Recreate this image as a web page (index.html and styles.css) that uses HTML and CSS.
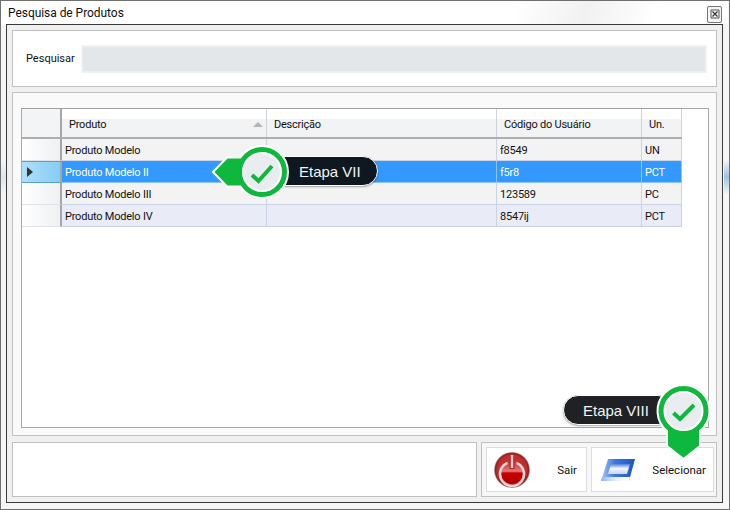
FILE: index.html
```html
<!DOCTYPE html>
<html lang="pt">
<head>
<meta charset="utf-8">
<title>Pesquisa de Produtos</title>
<link rel="stylesheet" href="styles.css">
</head>
<body>
<div class="window">
  <div class="glow glow-left"></div>
  <div class="glow glow-right"></div>
  <header class="titlebar">
    <span class="title">Pesquisa de Produtos</span>
    <button class="close" aria-label="Fechar">
      <svg width="10" height="10" viewBox="0 0 10 10"><path d="M1 1h8v8H1z" fill="none" stroke="#555" stroke-width="1"/><path d="M2.500 2.500l5 5M7.500 2.500l-5 5" stroke="#333" stroke-width="1.200"/></svg>
    </button>
  </header>
  <main class="client">
    <section class="panel search">
      <label class="search-label">Pesquisar</label>
      <div class="search-input"></div>
    </section>
    <section class="panel results">
      <div class="grid">
        <div class="table">
          <div class="row head">
            <div class="rowhead"></div>
            <div class="cell sorted">Produto<svg class="sort" width="10" height="5" viewBox="0 0 10 5"><path d="M0 5L5 0l5 5z" fill="#b4b4b4"/></svg></div>
            <div class="cell">Descrição</div>
            <div class="cell">Código do Usuário</div>
            <div class="cell">Un.</div>
          </div>
          <div class="row">
            <div class="rowhead"></div>
            <div class="cell">Produto Modelo</div><div class="cell"></div><div class="cell">f8549</div><div class="cell">UN</div>
          </div>
          <div class="row selected">
            <div class="rowhead"><svg width="6" height="10" viewBox="0 0 6 10"><path d="M0 0l6 5-6 5z" fill="#333"/></svg></div>
            <div class="cell">Produto Modelo II</div><div class="cell"></div><div class="cell">f5r8</div><div class="cell">PCT</div>
          </div>
          <div class="row">
            <div class="rowhead"></div>
            <div class="cell">Produto Modelo III</div><div class="cell"></div><div class="cell">123589</div><div class="cell">PC</div>
          </div>
          <div class="row alt">
            <div class="rowhead"></div>
            <div class="cell">Produto Modelo IV</div><div class="cell"></div><div class="cell">8547ij</div><div class="cell">PCT</div>
          </div>
        </div>
      </div>
    </section>
    <footer class="footer">
      <div class="panel status"></div>
      <div class="panel actions">
        <button class="action exit">
          <svg width="36" height="36" viewBox="0 0 36 36">
            <defs>
              <radialGradient id="red" cx="50%" cy="50%" r="50%"><stop offset="0" stop-color="#d84040"/><stop offset=".8" stop-color="#c42c2c"/><stop offset=".93" stop-color="#8e2424"/><stop offset="1" stop-color="#c8bcbc"/></radialGradient>
              <linearGradient id="core" x1="0" y1="0" x2="0" y2="1"><stop offset="0" stop-color="#c23a3a"/><stop offset=".42" stop-color="#e07a7a"/><stop offset=".5" stop-color="#cc0000"/><stop offset="1" stop-color="#b00000"/></linearGradient>
              <linearGradient id="blue" x1="0" y1="0" x2="1" y2="0"><stop offset="0" stop-color="#a8c6f4"/><stop offset=".4" stop-color="#3f78dc"/><stop offset="1" stop-color="#1f55c0"/></linearGradient>
              <linearGradient id="pane" x1="0" y1="0" x2="0" y2="1"><stop offset="0" stop-color="#4f80dc"/><stop offset=".45" stop-color="#f2f5fc"/><stop offset="1" stop-color="#c6d6f4"/></linearGradient>
              <linearGradient id="base" x1="0" y1="0" x2="1" y2="0"><stop offset="0" stop-color="#8fb6f0"/><stop offset=".5" stop-color="#e8f0fc"/><stop offset="1" stop-color="#ffffff"/></linearGradient>
            </defs>
            <circle cx="18" cy="18" r="18" fill="url(#red)"/>
            <circle cx="18" cy="21" r="11" fill="url(#core)"/>
            <path d="M13.500 10.900A12 12 0 1 0 22.500 10.900" fill="none" stroke="#efd6d6" stroke-width="2.600"/>
            <path d="M18 3v14" stroke="#b82828" stroke-width="5"/>
            <path d="M18 3v13" stroke="#eccccc" stroke-width="2.400"/>
          </svg>
          <span>Sair</span>
        </button>
        <button class="action select">
          <svg width="34" height="24" viewBox="0 0 34 24">
            <path d="M7 1h27l-6 22H0z" fill="url(#blue)"/>
            <path d="M10 6h19l-3 10H7z" fill="url(#pane)"/>
            <path d="M0 23h28l1-4H1z" fill="url(#base)"/>
          </svg>
          <span>Selecionar</span>
        </button>
      </div>
    </footer>
  </main>

  <div class="callout step7">
    <div class="pill pill7">Etapa VII</div>
    <svg class="badge" width="82" height="60" viewBox="0 0 82 60">
      <path d="M3 28L17 13.500h13.400A26 26 0 1 1 30.400 42.500H17z" fill="#0db83c" stroke="#fff" stroke-width="2"/>
      <circle cx="52" cy="28" r="19" fill="#e9edf0" stroke="#fff" stroke-width="2"/>
      <path d="M42 31l6.500 6L62 22" fill="none" stroke="#0db83c" stroke-width="4"/>
    </svg>
  </div>

  <div class="callout step8">
    <div class="pill pill8">Etapa VIII</div>
    <svg class="badge" width="60" height="82" viewBox="0 0 60 82">
      <path d="M13 50A26 26 0 1 1 46 50V65L29.500 78 13 65z" fill="#0db83c" stroke="#fff" stroke-width="2"/>
      <circle cx="29.500" cy="30" r="19" fill="#e9edf0" stroke="#fff" stroke-width="2"/>
      <path d="M19.500 32l6.500 6 14-14" fill="none" stroke="#0db83c" stroke-width="4"/>
    </svg>
  </div>
</div>
</body>
</html>
```

FILE: styles.css
```css
* { box-sizing: border-box; }
html, body { margin: 0; padding: 0; }
body { width: 730px; height: 510px; overflow: hidden; font-family: Roboto, "Noto Sans", sans-serif; font-size: 11px; letter-spacing: -.22px; color: #111; }

.window { position: relative; width: 730px; height: 510px; display: flex; flex-direction: column; background: #f5f5f5; border: 1px solid #6f6f6f; padding: 0 6px 6px 5px; }
.glow { position: absolute; width: 5px; height: 32px; top: 160px; background: linear-gradient(to bottom, #eef2f6, #8ab4e0 50%, #eef2f6); }
.glow-left { left: 0; opacity: .25; }
.glow-right { right: 0; opacity: .8; }

.titlebar { height: 23px; display: flex; align-items: center; justify-content: space-between; background: linear-gradient(110deg, #fff 70%, #f1f1f1 80%, #fff 90%); margin: 0 -5px 0 -5px; padding-left: 7px; padding-right: 6px; }
.title { font-size: 12px; letter-spacing: -.05px; color: #111; }
.close { width: 15px; height: 17px; padding: 0; border: 1px solid #777; border-radius: 2px; background: #f4f4f4; display: flex; align-items: center; justify-content: center; margin-top: 3px; }

.client { flex: 1; display: flex; flex-direction: column; gap: 5px; background: #f0f0f0; border: 1px solid #3a3a3a; padding: 5px; }
.panel { background: #fff; border: 1px solid #c0c0c0; }

.search { height: 57px; display: flex; align-items: center; padding: 0 10px 0 13px; flex: none; }
.search-label { width: 56px; font-size: 11px; letter-spacing: 0; flex: none; }
.search-input { flex: 1; height: 26px; background: #e4e7ea; border: 1px solid #eef0f2; box-shadow: 0 0 0 1px #f2f2f2; }

.results { height: 344px; padding: 15px 7px 7px 8px; flex: none; background: #fafafa; }
.grid { height: 100%; background: #fff; border: 1px solid #a8a8a8; }
.table { width: 660px; }
.row { display: grid; grid-template-columns: 40px 205px 230px 145px 40px; height: 22px; background: #f3f3f3; }
.row.alt { background: #e9ecf6; }
.row.head { background: linear-gradient(to bottom, #fff 35%, #f1f3f5 36%, #f1f3f5); border-top: 1px solid #a0a0a0; border-bottom: 2px solid #aeaeae; margin-top: -1px; height: 31px; }
.cell { display: flex; align-items: center; padding: 1px 0 0 3px; border-right: 1px solid #c9d2e6; border-bottom: 1px solid #c9d2e6; white-space: nowrap; overflow: hidden; }
.head .cell { padding: 2px 0 0 7px; border-bottom: 0; border-right: 1px solid #cfd2d6; }
.head .sorted { justify-content: space-between; padding-right: 3px; }
.rowhead { display: flex; align-items: center; padding-left: 5px; background: linear-gradient(to right, #fff, #eef0f2); border-right: 2px solid #a6a6a6; border-bottom: 1px solid #dfe2e6; }
.head .rowhead { background: #f3f4f5; border-bottom: 0; }
.selected { background: #3399ff; color: #fff; }
.selected .rowhead { background: linear-gradient(to right, #aee0fa, #86cdf5); border-top: 1px solid #5a9ed0; border-bottom: 1px solid #5a9ed0; }
.selected .cell { border-color: #8cc4fb; }

.footer { flex: 1; display: flex; gap: 3px; min-height: 0; margin-top: 1px; }
.status { width: 465px; flex: none; margin-right: 1px; }
.actions { flex: 1; display: flex; gap: 4px; padding: 4px 2px 4px 4px; background: #f7f7f7; }
.action { flex: none; height: 100%; display: flex; align-items: center; justify-content: space-between; background: #fff; border: 1px solid #dcdcdc; font: inherit; font-size: 11.500px; letter-spacing: 0; color: #111; cursor: pointer; }
.exit { width: 101px; padding: 0 9px 0 7px; }
.select { width: 123px; padding: 0 7px 0 9px; }

.callout { position: absolute; }
.badge { position: absolute; overflow: visible; }
.pill { position: absolute; display: flex; align-items: center; height: 30px; background: #0f1820; color: #f2f4f6; border: 1.500px solid #fff; border-radius: 15px; font-family: "Liberation Sans", Arial, sans-serif; font-size: 15px; letter-spacing: 0; box-shadow: 0 1px 2px rgba(0,0,0,.35); white-space: nowrap; }
.step7 { left: 206px; top: 142px; width: 170px; height: 60px; }
.step7 .badge { left: 3px; top: 1px; }
.pill7 { left: 52px; top: 13px; width: 119px; padding-left: 39px; }
.step8 { left: 562px; top: 380px; width: 150px; height: 82px; }
.step8 .badge { left: 91px; top: 0; }
.pill8 { left: 0; top: 14px; width: 110px; padding-left: 19px; background: #202124; }
```
